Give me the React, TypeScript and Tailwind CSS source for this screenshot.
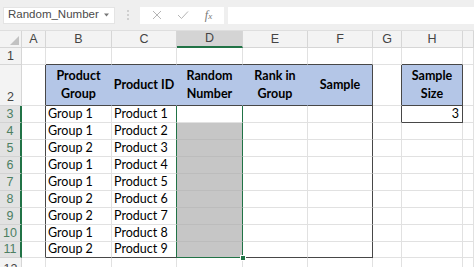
import React from "react";

const cols = ["A", "B", "C", "D", "E", "F", "G", "H", ""];

const groups = [1, 1, 2, 1, 1, 2, 2, 1, 2];

// border colours, one class per side so they never fight
const R_GRID = "border-r-[#e1e1e1]";
const R_DARK = "border-r-[#474747]";
const R_GREEN = "border-r-[#217346]";
const R_BLUE = "border-r-[#b4c6e7]";
const B_GRID = "border-b-[#e1e1e1]";
const B_DARK = "border-b-[#474747]";
const B_GREEN = "border-b-[#217346]";
const B_FILL = "border-b-[#bcbcbc]";

function rightBorder(r: number, c: number) {
  if (c === 0 && r >= 2 && r <= 11) return R_DARK;
  if (r === 2 && c >= 1 && c <= 4) return R_BLUE;
  if ((c === 2 || c === 3) && r >= 3 && r <= 11) return R_GREEN;
  if (c === 5 && r >= 2 && r <= 11) return R_DARK;
  if ((c === 6 || c === 7) && (r === 2 || r === 3)) return R_DARK;
  return R_GRID;
}

function bottomBorder(r: number, c: number) {
  if ((r === 1 || r === 2) && c >= 1 && c <= 5) return B_DARK;
  if (r === 11 && c === 3) return B_GREEN;
  if (r === 11 && c >= 1 && c <= 5) return B_DARK;
  if (c === 7 && r >= 1 && r <= 3) return B_DARK;
  if (c === 3 && r >= 4 && r <= 10) return B_FILL;
  return B_GRID;
}

const heads: Record<number, string[]> = {
  1: ["Product", "Group"],
  2: ["Product ID"],
  3: ["Random", "Number"],
  4: ["Rank in", "Group"],
  5: ["Sample"],
  7: ["Sample", "Size"],
};

function Cell({ r, c }: { r: number; c: number }) {
  const blue = r === 2 && ((c >= 1 && c <= 5) || c === 7);
  const sel = c === 3 && r >= 4 && r <= 11;
  const bg = blue ? "bg-[#b4c6e7]" : sel ? "bg-[#c6c6c6]" : "bg-white";
  const i = r - 3;

  let text: string | null = null;
  if (r >= 3 && r <= 11 && c === 1) text = `Group ${groups[i]}`;
  if (r >= 3 && r <= 11 && c === 2) text = `Product ${i + 1}`;

  return (
    <div className={`relative border-r border-b ${rightBorder(r, c)} ${bottomBorder(r, c)} ${bg} flex min-w-0`}>
      {r === 2 && heads[c] && (
        <div className="flex-1 flex flex-col items-center justify-center text-center font-bold text-[12.5px] leading-[18px] text-black whitespace-nowrap">
          {heads[c].map((line) => (
            <span key={line}>{line}</span>
          ))}
        </div>
      )}
      {text && (
        <div className="flex-1 flex items-end pl-[2px] pb-[1px] text-[12.5px] leading-[15px] text-black whitespace-nowrap">
          {text}
        </div>
      )}
      {r === 3 && c === 7 && (
        <div className="flex-1 flex items-end justify-end pr-[3px] pb-[1px] text-[12.5px] leading-[15px] text-black">
          3
        </div>
      )}
      {r === 11 && c === 3 && (
        <div className="absolute -right-[4px] -bottom-[4px] w-[6px] h-[6px] bg-[#217346] border border-white z-10" />
      )}
    </div>
  );
}

export default function App() {
  const rows = Array.from({ length: 12 }, (_, i) => i + 1);

  return (
    <div
      className="w-[474px] h-[267px] overflow-hidden bg-white"
      style={{ fontFamily: "Lato, 'Open Sans', sans-serif" }}
    >
      {/* Formula bar */}
      <div className="h-[31px] bg-[#efefef] flex items-center pl-[3px] border-b border-[#dedede]">
        <div className="w-[112px] h-[17px] bg-white border border-[#e4e4e4] flex items-center justify-between pl-[4px] pr-[5px]">
          <span className="text-[11.5px] text-[#4a4a4a] font-['Liberation_Sans',sans-serif]">Random_Number</span>
          <svg width="5" height="4" viewBox="0 0 5 4">
            <path d="M0 0.5 L5 0.5 L2.5 3.5 Z" fill="#777" />
          </svg>
        </div>
        <div className="w-[25px] flex justify-center">
          <svg width="2" height="10" viewBox="0 0 2 10">
            <rect x="0" y="0" width="2" height="2" fill="#cfcfcf" />
            <rect x="0" y="4" width="2" height="2" fill="#cfcfcf" />
            <rect x="0" y="8" width="2" height="2" fill="#cfcfcf" />
          </svg>
        </div>
        <div className="w-[84px] h-[17px] bg-white flex items-center justify-around px-[4px]">
          <svg width="10" height="10" viewBox="0 0 10 10">
            <path d="M1 1 L9 9 M9 1 L1 9" stroke="#b5b5b5" strokeWidth="1" />
          </svg>
          <svg width="12" height="10" viewBox="0 0 12 10">
            <path d="M1 5 L4.5 8.5 L11 1.5" stroke="#b5b5b5" strokeWidth="1" fill="none" />
          </svg>
          <span className="text-[12px] italic text-[#777] font-['Liberation_Serif',serif]">
            f<span className="text-[9px]">x</span>
          </span>
        </div>
        <div className="ml-[4px] flex-1 h-[17px] bg-white" />
      </div>

      {/* Sheet */}
      <div className="grid grid-cols-[22px_24px_66px_65px_66px_65px_65px_29px_61px_1fr] grid-rows-[17px_17px_41px_17px_17px_17px_17px_17px_17px_17px_17px_16px_20px]">
        {/* corner */}
        <div className="bg-[#f3f3f3] border-r border-b border-[#d6d6d6] flex items-end justify-end pr-[2px] pb-[2px]">
          <svg width="9" height="9" viewBox="0 0 9 9">
            <path d="M9 0 L9 9 L0 9 Z" fill="#c2c2c2" />
          </svg>
        </div>
        {cols.map((l, c) =>
          c === 3 ? (
            <div
              key={c}
              className="bg-[#d4d4d4] border-r border-r-[#d6d6d6] border-b-2 border-b-[#217346] flex items-center justify-center text-[12.5px] text-[#444] font-['Liberation_Sans',sans-serif]"
            >
              {l}
            </div>
          ) : (
            <div
              key={c}
              className="bg-[#f3f3f3] border-r border-b border-[#d6d6d6] flex items-center justify-center text-[12.5px] text-[#444] font-['Liberation_Sans',sans-serif]"
            >
              {l}
            </div>
          )
        )}

        {rows.map((r) => (
          <React.Fragment key={r}>
            {r >= 3 && r <= 11 ? (
              <div className="bg-[#e2e2e2] border-r-2 border-r-[#217346] border-b border-b-[#d2d2d2] flex items-end justify-center pb-[1px] text-[12.5px] leading-[14px] text-[#4d7f62] font-['Liberation_Sans',sans-serif]">
                {r}
              </div>
            ) : (
              <div className="bg-[#f3f3f3] border-r border-b border-[#d6d6d6] flex items-end justify-center pb-[1px] text-[12.5px] leading-[14px] text-[#444] font-['Liberation_Sans',sans-serif]">
                {r}
              </div>
            )}
            {cols.map((_, c) => (
              <Cell key={c} r={r} c={c} />
            ))}
          </React.Fragment>
        ))}
      </div>
    </div>
  );
}
